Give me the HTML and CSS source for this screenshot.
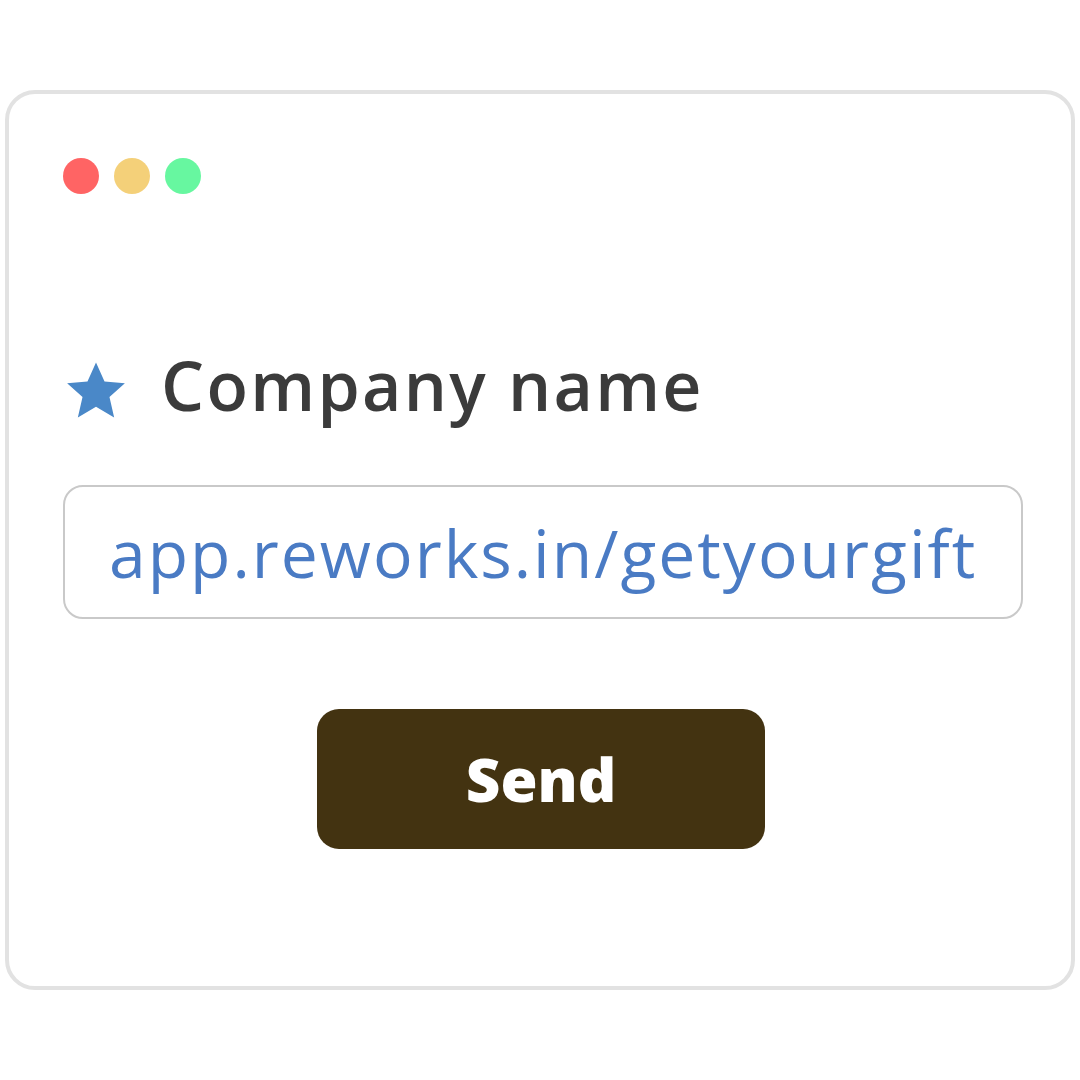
FILE: index.html
```html
<!DOCTYPE html>
<html>
<head>
<meta charset="utf-8">
<link rel="stylesheet" href="styles.css">
</head>
<body>
<div class="card">
  <div class="dots">
    <span class="dot red"></span>
    <span class="dot yellow"></span>
    <span class="dot green"></span>
  </div>
  <div class="label">
    <svg class="star" viewBox="0 0 24 24" width="66" height="66"><path d="M12 1.6l3.1 6.9 7.4.7-5.6 5 1.7 7.4L12 17.7l-6.6 3.9 1.7-7.4-5.6-5 7.4-.7z" fill="#4a88c8"/></svg>
    <span class="label-text">Company name</span>
  </div>
  <div class="field">app.reworks.in/getyourgift</div>
  <div class="actions">
    <button class="send">Send</button>
  </div>
</div>
</body>
</html>
```
FILE: styles.css
```css
html, body {
  margin: 0;
  padding: 0;
  background: #ffffff;
}
body {
  width: 1080px;
  height: 1080px;
  padding: 90px 0 0 5px;
  box-sizing: border-box;
}
.card {
  width: 1070px;
  height: 900px;
  box-sizing: border-box;
  border: 4px solid #e2e2e2;
  border-radius: 30px;
  background: #fff;
  padding: 64px 52px 0 54px;
  display: flex;
  flex-direction: column;
}
.dots {
  display: flex;
  gap: 15px;
}
.dot {
  width: 36px;
  height: 36px;
  border-radius: 50%;
  display: block;
}
.red { background: #ff6464; }
.yellow { background: #f4d079; }
.green { background: #67f7a0; }
.label {
  display: flex;
  align-items: center;
  margin-top: 151px;
  gap: 32px;
}
.star {
  display: block;
  margin-top: 12px;
}
.label-text {
  font-family: "Open Sans", sans-serif;
  font-weight: 600;
  font-size: 68px;
  color: #3b3b3b;
  letter-spacing: 2.3px;
  line-height: 80px;
}
.field {
  margin-top: 60px;
  height: 134px;
  width: 960px;
  box-sizing: border-box;
  border: 2px solid #c9c9c9;
  border-radius: 20px;
  display: flex;
  align-items: center;
  padding-left: 44px;
  font-family: "Open Sans", sans-serif;
  font-size: 66px;
  color: #4a7bc4;
  letter-spacing: 2px;
}
.actions {
  display: flex;
  justify-content: center;
  margin-top: 90px;
}
.send {
  width: 448px;
  height: 140px;
  border: none;
  border-radius: 22px;
  background: #433311;
  color: #fff;
  font-family: "Open Sans", sans-serif;
  font-weight: 800;
  font-size: 60px;
}
```
